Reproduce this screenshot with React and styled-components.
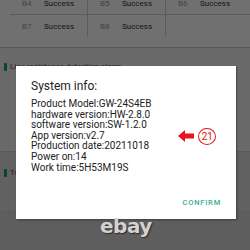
import React from "react";
import styled, { createGlobalStyle } from "styled-components";

const Global = createGlobalStyle`
  html, body { margin: 0; padding: 0; width: 250px; height: 250px; overflow: hidden; background: #5e5e5e; }
  * { box-sizing: border-box; }
`;

const Screen = styled.div`
  position: relative;
  width: 250px;
  height: 250px;
  overflow: hidden;
  background: #d6d6d6;
  font-family: Roboto, "Noto Sans", sans-serif;
  display: flex;
  flex-direction: column;
`;

const TableCard = styled.div`
  background: #ffffff;
  margin-top: -7px;
  padding: 0 0 10px 10px;
  border-bottom: 1px solid #c8c8c8;
`;

const Row = styled.div`
  display: grid;
  grid-template-columns: 78px 78px 78px;
  height: 22px;
  border-bottom: ${(p) => (p.$last ? "none" : "1px solid #d0d0d0")};
`;

const Cell = styled.div`
  display: flex;
  align-items: center;
  padding-left: 12px;
  font-size: 8px;
  border-right: ${(p) => (p.$sep ? "1px solid #d0d0d0" : "none")};
`;

const Label = styled.span`
  color: #9a9a9a;
  width: 22px;
`;

const Value = styled.span`
  color: #333;
`;

const Section = styled.div`
  background: ${(p) => p.$bg};
  height: ${(p) => p.$h}px;
  padding: ${(p) => p.$pt}px 0 0 4px;
  border-bottom: 1px solid #cfcfcf;
`;

const Heading = styled.div`
  display: flex;
  align-items: center;
  gap: 3px;
  font-size: 8px;
  color: #555;
`;

const Marker = styled.span`
  width: 3px;
  height: 8px;
  border-radius: 1px;
  background: #1f9e4a;
`;

const Overlay = styled.div`
  position: absolute;
  inset: 0;
  background: rgba(0, 0, 0, 0.56);
  padding: 66px 0 0 16px;
  display: flex;
  flex-direction: column;
  align-items: flex-start;
`;

const Dialog = styled.div`
  width: 220px;
  height: 153px;
  flex-shrink: 0;
  background: #ffffff;
  box-shadow: 1px 1px 2px rgba(0, 0, 0, 0.35);
  padding: 13px 15px 0 15px;
  display: flex;
  flex-direction: column;
`;

const Title = styled.div`
  font-size: 12px;
  color: #222;
  line-height: 14px;
  margin-bottom: 6px;
`;

const InfoRow = styled.div`
  display: flex;
  align-items: center;
  height: 10.6px;
`;

const Info = styled.div`
  font-size: 10px;
  color: #222;
  line-height: 10.6px;
  width: 147px;
  white-space: nowrap;
`;

const Callout = styled.div`
  display: flex;
  align-items: center;
  gap: 4px;
`;

const Circled = styled.span`
  width: 18px;
  height: 17px;
  border-radius: 50%;
  border: 1.3px solid #e3161c;
  color: #e3161c;
  font-size: 10.5px;
  display: flex;
  align-items: center;
  justify-content: center;
  letter-spacing: -0.4px;
`;

const Footer = styled.div`
  margin-top: auto;
  display: flex;
  justify-content: flex-end;
  padding: 0 0 12px 0;
`;

const Confirm = styled.span`
  font-size: 7.5px;
  letter-spacing: 0.8px;
  color: #34ad92;
  font-weight: 500;
`;

const Watermark = styled.div`
  position: relative;
  z-index: 2;
  margin: -5px 0 0 84px;
  font-family: "DejaVu Sans", "Liberation Sans", sans-serif;
  font-weight: bold;
  font-size: 20px;
  line-height: 24px;
  color: #d2d2d2;
  text-shadow: 1px 1px 1px #2a2a2a;
  letter-spacing: -0.5px;
`;

const Arrow = () => (
  <svg width="16" height="12" viewBox="0 0 16 12">
    <path d="M0 6 L7 0 L7 3.5 L16 3.5 L16 8.5 L7 8.5 L7 12 Z" fill="#e3161c" />
  </svg>
);

const rows = [
  [["B4", "Success"], ["B5", "Success"], ["B6", "Success"]],
  [["B7", "Success"], ["B8", "Success"], null],
];

const info = [
  "Product Model:GW-24S4EB",
  "hardware version:HW-2.8.0",
  "software version:SW-1.2.0",
  "App version:v2.7",
  "Production date:20211018",
  "Power on:14",
  "Work time:5H53M19S",
];

export default function App() {
  return (
    <>
      <Global />
      <Screen>
        <TableCard>
          {rows.map((r, i) => (
            <Row key={i} $last={i === rows.length - 1}>
              {r.map((c, j) => (
                <Cell key={j} $sep={j < 2}>
                  {c && (
                    <>
                      <Label>{c[0]}</Label>
                      <Value>{c[1]}</Value>
                    </>
                  )}
                </Cell>
              ))}
            </Row>
          ))}
        </TableCard>
        <Section $bg="#f2f2f2" $h={104} $pt={14}>
          <Heading>
            <Marker />
            Line resistance detection alarm
          </Heading>
        </Section>
        <Section $bg="#dedede" $h={60} $pt={16}>
          <Heading>
            <Marker />
            Total
          </Heading>
        </Section>
        <Overlay>
          <Dialog>
            <Title>System info:</Title>
            {info.map((t, i) => (
              <InfoRow key={i}>
                <Info>{t}</Info>
                {i === 3 && (
                  <Callout>
                    <Arrow />
                    <Circled>21</Circled>
                  </Callout>
                )}
              </InfoRow>
            ))}
            <Footer>
              <Confirm>CONFIRM</Confirm>
            </Footer>
          </Dialog>
          <Watermark>ebay</Watermark>
        </Overlay>
      </Screen>
    </>
  );
}
